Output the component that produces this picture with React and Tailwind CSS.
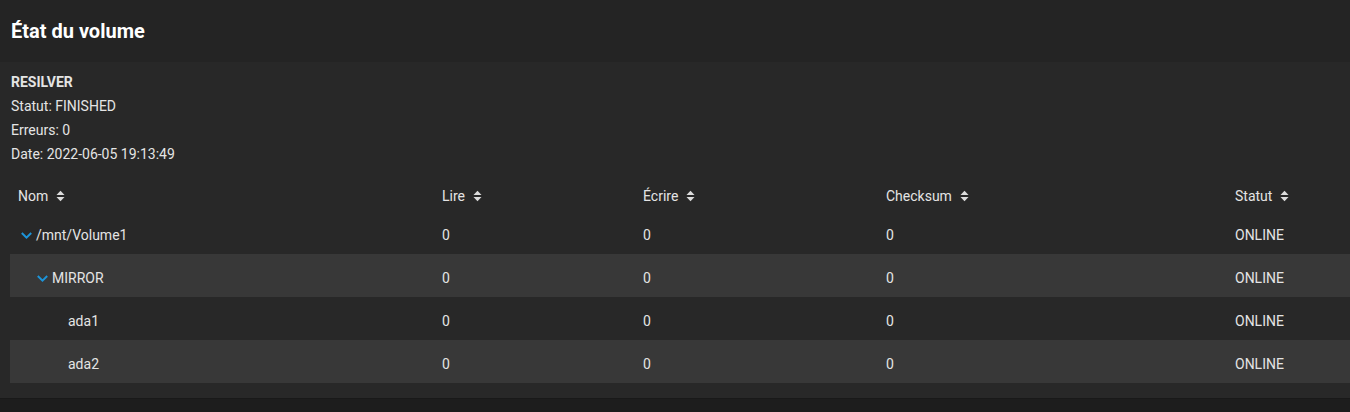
import React from "react";

const SortIcon = () => (
  <svg width="9" height="12" viewBox="0 0 9 12" className="ml-[8px] shrink-0" aria-hidden="true">
    <path d="M0.5 5 L4.5 0.8 L8.5 5 Z" fill="#dcdcdc" />
    <path d="M0.5 7 L8.5 7 L4.5 11.2 Z" fill="#dcdcdc" />
  </svg>
);

const Chevron = () => (
  <span className="w-[18px] flex items-center justify-start pl-[3px] shrink-0">
    <svg width="11" height="7" viewBox="0 0 11 7" aria-hidden="true">
      <path d="M0.8 1 L5.5 5.6 L10.2 1" fill="none" stroke="#1c94d9" strokeWidth="2" />
    </svg>
  </span>
);

const cols = "grid grid-cols-[424px_201px_243px_349px_1fr]";

const rows = [
  { name: "/mnt/Volume1", level: 0, expandable: true },
  { name: "MIRROR", level: 1, expandable: true },
  { name: "ada1", level: 2, expandable: false },
  { name: "ada2", level: 2, expandable: false },
];

const indent = ["pl-[8px]", "pl-[24px]", "pl-[40px]"];

export default function App() {
  return (
    <div
      className="w-[1350px] h-[412px] bg-[#1d1d1d] text-[#e4e4e4] overflow-hidden"
      style={{ fontFamily: "Roboto, 'Noto Sans', Arial, sans-serif" }}
    >
      <div className="h-[62px] bg-[#242424] flex items-center px-[11px]">
        <h1 className="text-[20px] font-bold text-white leading-none pb-[1px]">État du volume</h1>
      </div>
      <div className="bg-[#282828] pt-[8px] pb-[15px] border-b border-[#191919]">
        <div className="px-[11px] text-[14px] leading-[24px]">
          <div className="font-bold">RESILVER</div>
          <div>Statut: FINISHED</div>
          <div>Erreurs: 0</div>
          <div>Date: 2022-06-05 19:13:49</div>
        </div>
        <div className="ml-[10px] text-[14px]">
          <div className={`${cols} h-[45px] pt-[15px] items-center`}>
            {["Nom", "Lire", "Écrire", "Checksum", "Statut"].map((h) => (
              <div key={h} className="flex items-center pl-[8px]">
                <span>{h}</span>
                <SortIcon />
              </div>
            ))}
          </div>
          {rows.map((r, i) => (
            <div
              key={r.name}
              className={`${cols} h-[43px] pt-[5px] items-center ${i % 2 === 1 ? "bg-[#383838]" : ""}`}
            >
              <div className={`flex items-center ${indent[r.level]}`}>
                {r.expandable ? <Chevron /> : <span className="w-[18px] shrink-0" />}
                <span>{r.name}</span>
              </div>
              <div className="pl-[8px]">0</div>
              <div className="pl-[8px]">0</div>
              <div className="pl-[8px]">0</div>
              <div className="pl-[8px]">ONLINE</div>
            </div>
          ))}
        </div>
      </div>
    </div>
  );
}
